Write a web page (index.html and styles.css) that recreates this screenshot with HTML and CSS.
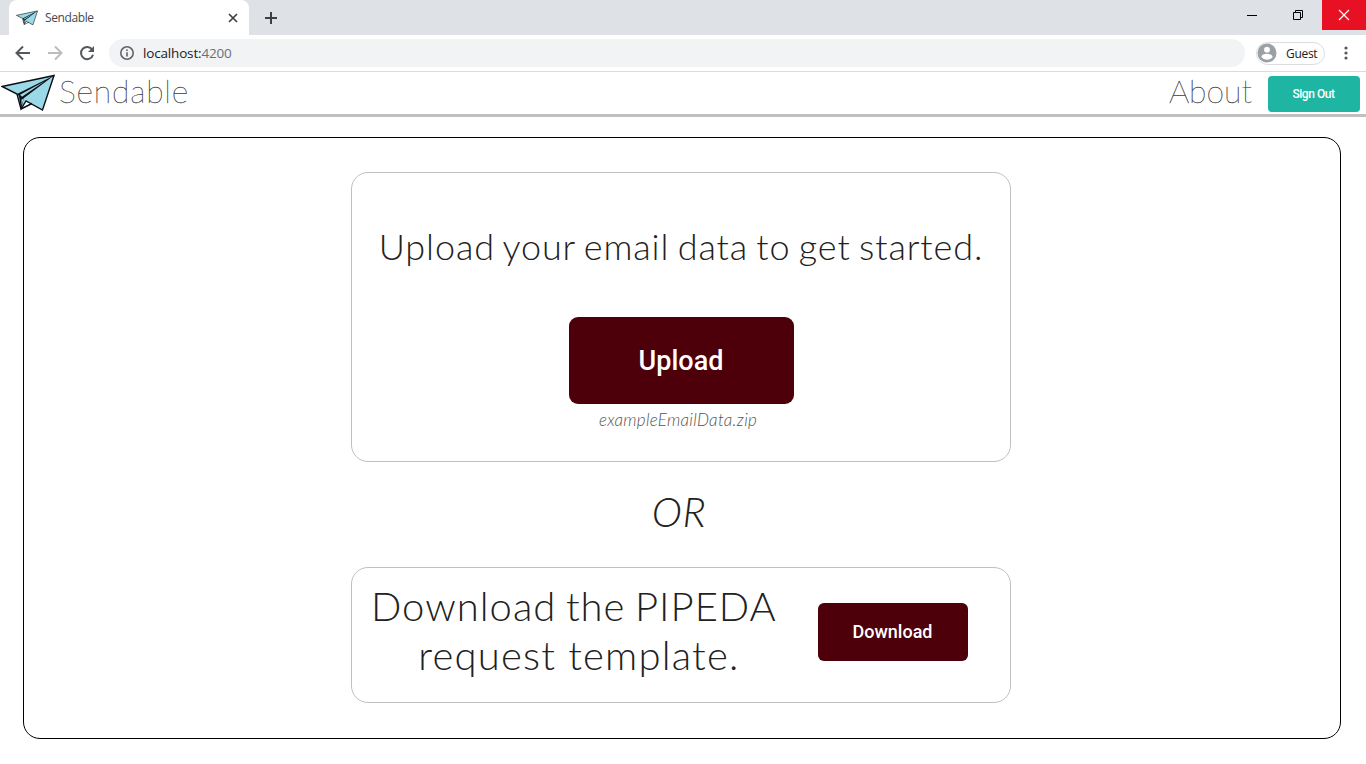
FILE: index.html
```html
<!DOCTYPE html>
<html lang="en">
<head>
<meta charset="utf-8">
<title>Sendable</title>
<link rel="stylesheet" href="styles.css">
</head>
<body>
<svg class="defs" width="0" height="0">
  <symbol id="plane" viewBox="0 0 54 38">
    <path d="M1 12.500 53 1.500 41.500 36 25 27 20 35 16 20Z" fill="#9bd9e8" stroke="#0b0f12" stroke-width="1.400"/>
    <path d="M16 20 53 1.500 23 24 20 35 18 22Z" fill="#0b0f12"/>
    <path d="M19 20.800 44 7 21 22.800ZM20.500 25.500 23 24.500 20.500 31Z" fill="#9bd9e8"/>
    <path d="M20 35 31 29.500" stroke="#0b0f12" stroke-width="1.400"/>
  </symbol>
</svg>
<div class="tabstrip">
  <div class="tab">
    <svg class="favicon"><use href="#plane"/></svg>
    <span class="tab-title">Sendable</span>
    <svg class="tab-close" viewBox="0 0 10 10"><path d="M1 1 9 9M9 1 1 9"/></svg>
  </div>
  <svg class="new-tab" viewBox="0 0 12 12"><path d="M6 0V12M0 6H12"/></svg>
  <div class="window-controls">
    <svg class="control" viewBox="0 0 46 30"><path d="M17 15.500H27"/></svg>
    <svg class="control" viewBox="0 0 46 30"><path d="M17.500 12.500H24.500V19.500H17.500ZM19.500 12.500V10.500H26.500V17.500H24.500"/></svg>
    <svg class="control close" viewBox="0 0 44 30"><path d="M17 10 27 20M27 10 17 20"/></svg>
  </div>
</div>
<div class="toolbar">
  <svg class="nav" viewBox="0 0 16 16"><path d="M15 8H2M8 1.500 1.500 8 8 14.500"/></svg>
  <svg class="nav disabled" viewBox="0 0 16 16"><path d="M1 8H14M8 1.500 14.500 8 8 14.500"/></svg>
  <svg class="nav" viewBox="0 0 16 16"><path d="M13.300 4.800A6.100 6.100 0 1 0 14 9.700"/><path class="solid" d="M15 1V7H9Z"/></svg>
  <div class="address">
    <svg class="info" viewBox="0 0 14 14"><circle cx="7" cy="7" r="6.200"/><path d="M7 6.300V10.500M7 3.500V5"/></svg>
    <span class="url">localhost:<span class="port">4200</span></span>
  </div>
  <div class="profile">
    <svg class="avatar" viewBox="0 0 20 20"><circle cx="10" cy="10" r="9.500" fill="#9aa0a6"/><circle cx="10" cy="6.700" r="2.900" fill="#fff"/><path d="M4.300 14Q5 10.800 10 10.800T15.700 14Q13.500 16.800 10 16.800T4.300 14Z" fill="#fff"/></svg>
    <span class="guest">Guest</span>
  </div>
  <svg class="menu" viewBox="0 0 4 14"><circle cx="2" cy="2" r="1.600"/><circle cx="2" cy="7" r="1.600"/><circle cx="2" cy="12" r="1.600"/></svg>
</div>
<header class="header">
  <svg class="logo"><use href="#plane"/></svg>
  <span class="brand">Sendable</span>
  <a class="about">About</a>
  <button class="button sign-out">Sign Out</button>
</header>
<main class="panel">
  <section class="card upload-card">
    <h1 class="heading">Upload your email data to get started.</h1>
    <button class="button upload">Upload</button>
    <span class="filename">exampleEmailData.zip</span>
  </section>
  <div class="or">OR</div>
  <section class="card download-card">
    <h2 class="template"><span class="line-one">Download the PIPEDA</span><br><span class="line-two">request template.</span></h2>
    <button class="button download">Download</button>
  </section>
</main>
</body>
</html>
```
FILE: styles.css
```css
* { box-sizing: border-box; }
body { margin: 0; height: 764px; overflow: hidden; background: #fff; font-family: Lato, sans-serif; font-weight: 300; color: #212121; }
svg { flex: none; display: block; }
.defs { display: none; }
.tabstrip { display: flex; height: 35px; background: #dee1e6; padding-left: 9px; }
.tab { display: flex; align-items: center; width: 240px; height: 35px; padding: 0 11px 0 7px; background: #fff; border-radius: 8px 8px 0 0; }
.favicon { width: 22px; height: 16px; }
.tab-title { margin-left: 7px; flex: 1; font: 400 12px "Open Sans", sans-serif; letter-spacing: -.4px; color: #45494d; }
.tab-close { width: 10px; height: 10px; fill: none; stroke: #3c4043; stroke-width: 1.7; }
.new-tab { width: 12px; height: 12px; margin: 12px 0 0 16px; stroke: #3c4043; stroke-width: 2; }
.window-controls { display: flex; margin-left: auto; }
.control { width: 46px; height: 30px; fill: none; stroke: #000; stroke-width: 1; }
.close { width: 44px; background: #e81123; stroke: #fff; stroke-width: 1.2; }
.toolbar { display: flex; align-items: center; height: 37px; padding: 0 18px 0 15px; border-bottom: 1px solid #d9dbde; }
.nav { width: 16px; height: 16px; margin-right: 16px; fill: none; stroke: #55595e; stroke-width: 2; }
.nav .solid { fill: #55595e; stroke: none; }
.disabled { stroke: #babcbe; }
.address { display: flex; align-items: center; flex: 1; height: 28px; margin-left: -2px; padding-left: 11px; border-radius: 14px; background: #f1f3f4; }
.info { width: 14px; height: 14px; fill: none; stroke: #5f6368; stroke-width: 1.600; }
.url { margin-left: 9px; font: 400 13.500px "Open Sans", sans-serif; letter-spacing: -.17px; color: #202124; }
.port { color: #6b6f73; }
.profile { display: flex; align-items: center; width: 69px; height: 23px; margin: 0 20px 0 11px; border: 1px solid #dadce0; border-radius: 12px; }
.avatar { width: 20px; height: 20px; }
.guest { margin-left: 9px; font: 400 12px "Open Sans", sans-serif; letter-spacing: -.3px; color: #202124; }
.menu { width: 4px; height: 14px; margin-left: -1px; fill: #55595e; }
.header { display: flex; align-items: center; height: 45px; padding: 0 6px 0 1px; border-bottom: 3px solid #c0c0c0; }
.logo { width: 54px; height: 38px; }
.brand { margin: -6px 0 0 4px; font-size: 32px; font-weight: 100; letter-spacing: .8px; color: #222; -webkit-text-stroke: .3px #444; }
.about { margin: -5px 16px 0 auto; font-size: 32px; font-weight: 100; color: #222; -webkit-text-stroke: .3px #444; }
.button { padding: 0; border: 0; font-family: Roboto, sans-serif; font-weight: 500; color: #fff; background: #4d000a; }
.sign-out { width: 92px; height: 36px; margin-top: 1px; padding-right: 1px; border-radius: 4px; font-size: 12px; letter-spacing: -.45px; background: #1fb5a3; }
.panel { display: flex; flex-direction: column; align-items: center; width: 1318px; height: 602px; margin: 20px 0 0 23px; padding: 34px 2px 0 0; border: 1px solid #000; border-radius: 17px; }
.card { display: flex; flex: none; width: 660px; border: 1px solid #c0c0c0; border-radius: 17px; }
.upload-card { flex-direction: column; align-items: center; height: 290px; padding-top: 51px; }
.heading { margin: 0; font-size: 36px; line-height: 44px; font-weight: 300; letter-spacing: .9px; word-spacing: -2.400px; white-space: nowrap; }
.upload { width: 225px; height: 87px; margin-top: 49px; border-radius: 9px; font-size: 27px; }
.filename { margin: 6px 6px 0 0; font-size: 17px; line-height: 20px; font-style: italic; letter-spacing: .3px; color: #555; }
.or { height: 105px; padding: 26px 4px 0 0; font-size: 41px; line-height: 48px; font-style: italic; font-weight: 300; letter-spacing: .5px; }
.download-card { height: 136px; padding: 14px 42px 0 19px; justify-content: space-between; }
.template { margin: 0; font-size: 40px; line-height: 49px; font-weight: 300; text-align: center; white-space: nowrap; }
.line-one { letter-spacing: 1px; word-spacing: -2.300px; }
.line-two { letter-spacing: 1.200px; padding-left: 10px; }
.download { width: 150px; height: 58px; margin-top: 21px; border-radius: 6px; font-size: 18px; padding: 0 1px 2px 0; }
```
